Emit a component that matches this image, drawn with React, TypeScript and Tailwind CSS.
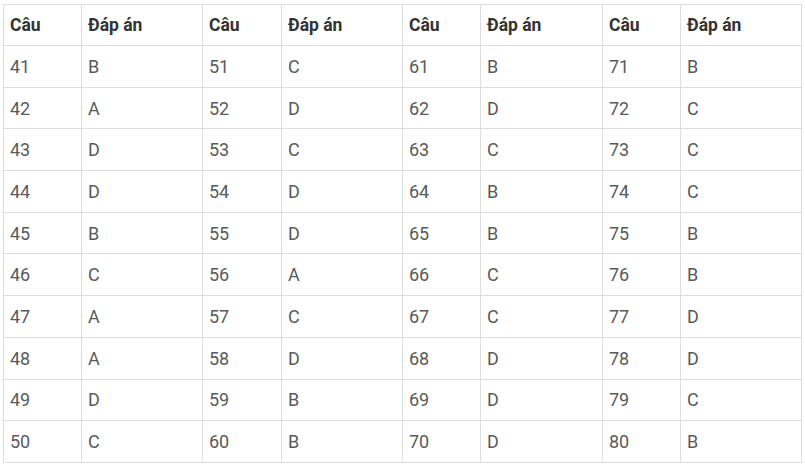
const rows: [string, string][][] = [
  [["41", "B"], ["51", "C"], ["61", "B"], ["71", "B"]],
  [["42", "A"], ["52", "D"], ["62", "D"], ["72", "C"]],
  [["43", "D"], ["53", "C"], ["63", "C"], ["73", "C"]],
  [["44", "D"], ["54", "D"], ["64", "B"], ["74", "C"]],
  [["45", "B"], ["55", "D"], ["65", "B"], ["75", "B"]],
  [["46", "C"], ["56", "A"], ["66", "C"], ["76", "B"]],
  [["47", "A"], ["57", "C"], ["67", "C"], ["77", "D"]],
  [["48", "A"], ["58", "D"], ["68", "D"], ["78", "D"]],
  [["49", "D"], ["59", "B"], ["69", "D"], ["79", "C"]],
  [["50", "C"], ["60", "B"], ["70", "D"], ["80", "B"]],
];

const widths = ["w-[78px]", "w-[121px]", "w-[79px]", "w-[121px]", "w-[78px]", "w-[122px]", "w-[78px]", "w-[121px]"];

export default function App() {
  return (
    <div className="bg-white w-[805px] h-[469px] pt-[4px] pl-[3px] font-['Roboto',sans-serif]">
      <table className="border-collapse table-fixed w-[799px]">
        <colgroup>
          {widths.map((w, i) => (
            <col key={i} className={w} />
          ))}
        </colgroup>
        <thead>
          <tr className="h-[41px]">
            {[0, 1, 2, 3].map((i) => (
              <>
                <th key={"c" + i} className="border border-[#dddddd] px-[6px] text-left text-[17.5px] font-bold text-[#333333]">Câu</th>
                <th key={"d" + i} className="border border-[#dddddd] px-[6px] text-left text-[17.5px] font-bold text-[#333333]">Đáp án</th>
              </>
            ))}
          </tr>
        </thead>
        <tbody>
          {rows.map((r, ri) => (
            <tr key={ri} className="h-[41.7px]">
              {r.map(([q, a], ci) => (
                <>
                  <td key={"q" + ci} className="border border-[#dddddd] px-[6px] text-[18px] text-[#5a5a5a]">{q}</td>
                  <td key={"a" + ci} className="border border-[#dddddd] px-[6px] text-[18px] text-[#5a5a5a]">{a}</td>
                </>
              ))}
            </tr>
          ))}
        </tbody>
      </table>
    </div>
  );
}
